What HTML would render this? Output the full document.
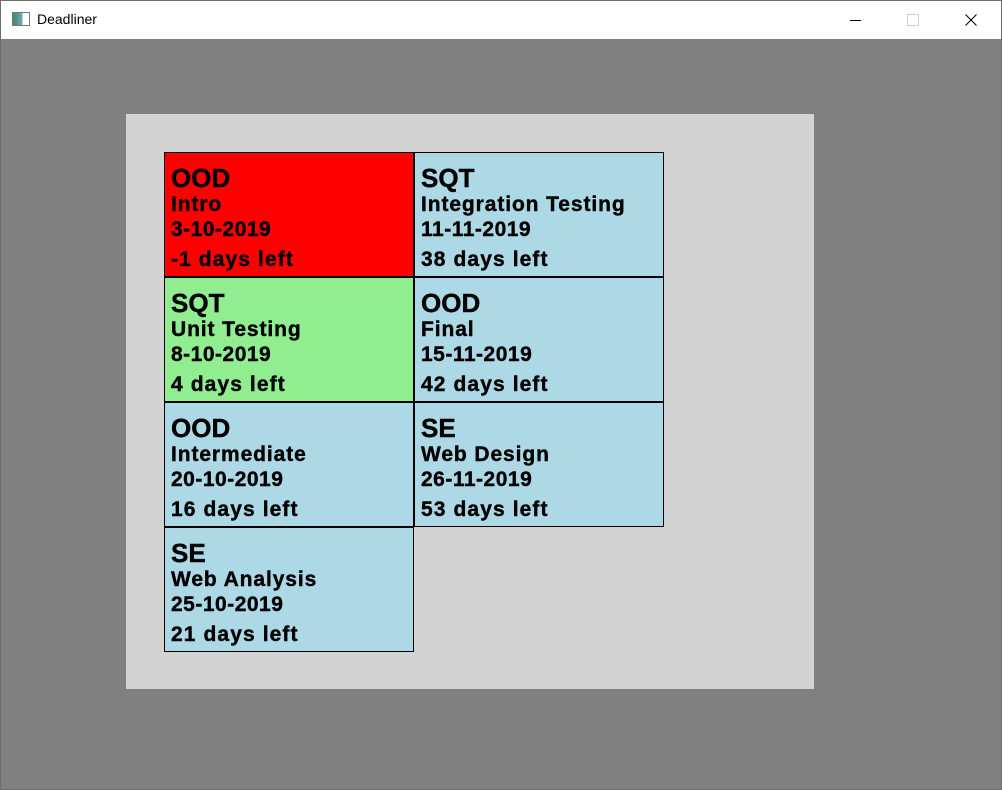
<!DOCTYPE html>
<html><head><style>
body{margin:0;width:1002px;height:790px;overflow:hidden;font-family:"Liberation Sans",sans-serif;position:relative;background:#fff}
.win{position:absolute;left:0;top:0;width:1000px;height:788px;border:1px solid #6d6d6d}
.tb{position:absolute;left:0;top:0;width:1000px;height:38px;background:#fff}
.tt{position:absolute;left:36px;top:10px;font-size:14px;color:#000}
.ic{position:absolute;left:11px;top:11px;width:16px;height:12px;border:1px solid #777;background:linear-gradient(90deg,#3a8a6a 0,#7ab 60%,#fff 60%)}
.main{position:absolute;left:0;top:38px;width:1000px;height:750px;background:#808080}
.panel{position:absolute;left:126px;top:114px;width:688px;height:575px;background:#d3d3d3}
.c{position:absolute;width:248px;height:123px;border:1px solid #000;font-weight:bold;color:#000}
.c div{position:absolute;left:6px;white-space:nowrap;-webkit-text-stroke:0.4px #000}
.a{top:10px;font-size:26px}
.b{top:40px;font-size:21px;letter-spacing:0.9px}
.d{top:65px;font-size:21px;letter-spacing:0.5px}
.e{top:95px;font-size:21px;letter-spacing:1.1px}
.r{background:#f00}.g{background:#90ee90}.l{background:#add8e6}
</style></head><body>
<div class="win">
<div class="tb"><div class="ic"></div><div class="tt">Deadliner</div>
<div style="position:absolute;left:849px;top:19px;width:11px;height:1px;background:#000"></div>
<div style="position:absolute;left:906px;top:13px;width:10px;height:10px;border:1px solid #ccc"></div>
<svg style="position:absolute;left:964px;top:13px" width="12" height="12"><path d="M0.5 0.5L11.5 11.5M11.5 0.5L0.5 11.5" stroke="#000" stroke-width="1"/></svg>
</div>
<div class="main"></div>
</div>
<div class="panel"></div>
<div class="c r" style="left:164px;top:152px"><div class="a">OOD</div><div class="b">Intro</div><div class="d">3-10-2019</div><div class="e">-1 days left</div></div>
<div class="c l" style="left:414px;top:152px"><div class="a">SQT</div><div class="b">Integration Testing</div><div class="d">11-11-2019</div><div class="e">38 days left</div></div>
<div class="c g" style="left:164px;top:277px"><div class="a">SQT</div><div class="b">Unit Testing</div><div class="d">8-10-2019</div><div class="e">4 days left</div></div>
<div class="c l" style="left:414px;top:277px"><div class="a">OOD</div><div class="b">Final</div><div class="d">15-11-2019</div><div class="e">42 days left</div></div>
<div class="c l" style="left:164px;top:402px"><div class="a">OOD</div><div class="b">Intermediate</div><div class="d">20-10-2019</div><div class="e">16 days left</div></div>
<div class="c l" style="left:414px;top:402px"><div class="a">SE</div><div class="b">Web Design</div><div class="d">26-11-2019</div><div class="e">53 days left</div></div>
<div class="c l" style="left:164px;top:527px"><div class="a">SE</div><div class="b">Web Analysis</div><div class="d">25-10-2019</div><div class="e">21 days left</div></div>
</body></html>
